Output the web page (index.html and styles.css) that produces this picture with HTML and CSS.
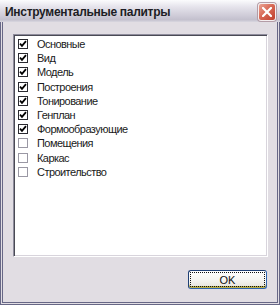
FILE: index.html
```html
<!DOCTYPE html>
<html lang="ru">
<head>
<meta charset="utf-8">
<title>Инструментальные палитры</title>
<link rel="stylesheet" href="styles.css">
</head>
<body>
<div class="window">
  <div class="titlebar">
    <span class="title">Инструментальные палитры</span>
    <button class="close" aria-label="Закрыть">
      <svg width="10" height="10" viewBox="0 0 10 10"><path d="M1 1L9 9M9 1L1 9" stroke="#fff" stroke-width="2.2" stroke-linecap="square"/></svg>
    </button>
  </div>
  <div class="client">
    <ul class="list">
      <li class="item"><span class="cb on"><svg viewBox="0 0 8 8" width="8" height="8"><path d="M1 3.6L3 5.8L7 1.2" fill="none" stroke="#000" stroke-width="1.8"/></svg></span>Основные</li>
      <li class="item"><span class="cb on"><svg viewBox="0 0 8 8" width="8" height="8"><path d="M1 3.6L3 5.8L7 1.2" fill="none" stroke="#000" stroke-width="1.8"/></svg></span>Вид</li>
      <li class="item"><span class="cb on"><svg viewBox="0 0 8 8" width="8" height="8"><path d="M1 3.6L3 5.8L7 1.2" fill="none" stroke="#000" stroke-width="1.8"/></svg></span>Модель</li>
      <li class="item"><span class="cb on"><svg viewBox="0 0 8 8" width="8" height="8"><path d="M1 3.6L3 5.8L7 1.2" fill="none" stroke="#000" stroke-width="1.8"/></svg></span>Построения</li>
      <li class="item"><span class="cb on"><svg viewBox="0 0 8 8" width="8" height="8"><path d="M1 3.6L3 5.8L7 1.2" fill="none" stroke="#000" stroke-width="1.8"/></svg></span>Тонирование</li>
      <li class="item"><span class="cb on"><svg viewBox="0 0 8 8" width="8" height="8"><path d="M1 3.6L3 5.8L7 1.2" fill="none" stroke="#000" stroke-width="1.8"/></svg></span>Генплан</li>
      <li class="item"><span class="cb on"><svg viewBox="0 0 8 8" width="8" height="8"><path d="M1 3.6L3 5.8L7 1.2" fill="none" stroke="#000" stroke-width="1.8"/></svg></span>Формообразующие</li>
      <li class="item"><span class="cb"></span>Помещения</li>
      <li class="item"><span class="cb"></span>Каркас</li>
      <li class="item"><span class="cb"></span>Строительство</li>
    </ul>
    <div class="footer">
      <button class="ok">OK</button>
    </div>
  </div>
</div>
</body>
</html>
```

FILE: styles.css
```css
* { box-sizing: border-box; }
html, body { margin: 0; padding: 0; }
body {
  width: 280px;
  height: 305px;
  overflow: hidden;
  font-family: "Liberation Sans", Arial, sans-serif;
  font-size: 11px;
  color: #111;
  background: #e1dde3;
}
.window {
  width: 280px;
  height: 305px;
  display: flex;
  flex-direction: column;
}
.titlebar {
  height: 22px;
  flex: none;
  display: flex;
  align-items: center;
  padding: 0 4px 0 5px;
  background: linear-gradient(#fbfbfd 0%, #e6e4ec 30%, #cfccd8 70%, #c3c0cd 90%, #d9d7e0 100%);
}
.title {
  flex: 1;
  font-weight: bold;
  font-size: 12px;
  color: #1d1d24;
  letter-spacing: -0.3px;
  padding-top: 2px;
}
.close {
  width: 18px;
  height: 18px;
  padding: 0;
  margin: 1px 0 0 0;
  border: 1px solid #f4eef0;
  border-radius: 3px;
  background: linear-gradient(135deg, #eaa596 0%, #d86a57 45%, #bf3f2e 100%);
  box-shadow: 0 0 0 1px #b39ca6;
  display: flex;
  align-items: center;
  justify-content: center;
}
.close svg { display: block; }
.client {
  flex: 1;
  display: flex;
  flex-direction: column;
  border: 3px double #676786;
  border-top: none;
  padding: 12px 9px 13px 10px;
  background: #e1dde3;
}
.list {
  list-style: none;
  margin: 0;
  height: 223px;
  flex: none;
  padding: 2px 0 0 2px;
  background: #fff;
  border: 1px solid;
  border-color: #8e8c9c #ffffff #ffffff #8e8c9c;
  box-shadow: inset 1px 1px 0 #4a4a55, inset -1px -1px 0 #d8d4dc;
}
.item {
  height: 14.2px;
  display: flex;
  align-items: center;
  padding-left: 2px;
  white-space: nowrap;
  letter-spacing: -0.55px;
  color: #1a1a1a;
}
.cb {
  width: 10px;
  height: 10px;
  margin-right: 9px;
  border: 1px solid #9a98a4;
  background: #fff;
  display: flex;
  align-items: center;
  justify-content: center;
}
.cb.on { border-color: #2a2a30; }
.cb svg { display: block; }
.footer {
  margin-top: 13px;
  display: flex;
  justify-content: flex-end;
  padding-right: 1px;
}
.ok {
  width: 79px;
  height: 19px;
  padding: 0;
  font-family: "Liberation Sans", Arial, sans-serif;
  font-size: 11px;
  color: #111;
  border: 1px solid #1f3f74;
  border-bottom-color: #2f65b0;
  border-right-color: #2f65b0;
  border-radius: 3px;
  background: linear-gradient(#ffffff 0%, #f4f3ef 60%, #e4e1da 100%);
  box-shadow: inset 0 -2px 0 #b7ad4c;
  outline: 1px dotted #111;
  outline-offset: -3px;
}
```
